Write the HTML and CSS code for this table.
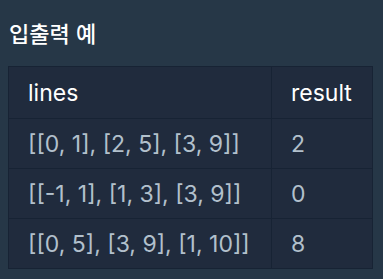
FILE: index.html
```html
<!DOCTYPE html>
<html lang="ko">
<head>
<meta charset="utf-8">
<link rel="stylesheet" href="styles.css">
</head>
<body>
<h5 class="title">입출력 예</h5>
<table class="io">
  <thead>
    <tr><th class="c1">lines</th><th class="c2">result</th></tr>
  </thead>
  <tbody>
    <tr><td>[[0, 1], [2, 5], [3, 9]]</td><td>2</td></tr>
    <tr><td>[[-1, 1], [1, 3], [3, 9]]</td><td>0</td></tr>
    <tr><td>[[0, 5], [3, 9], [1, 10]]</td><td>8</td></tr>
  </tbody>
</table>
</body>
</html>
```

FILE: styles.css
```css
html, body {
  margin: 0;
  background: #263747;
}
body {
  padding: 0 8px;
  font-family: Inter, "Noto Sans CJK KR", sans-serif;
}
.title {
  margin: 0;
  padding: 16px 0 0 1px;
  height: 66px;
  box-sizing: border-box;
  font-family: "Noto Sans CJK KR", sans-serif;
  font-size: 22px;
  font-weight: 500;
  color: #ffffff;
  line-height: 32px;
}
.io {
  width: 365px;
  table-layout: fixed;
  border-collapse: collapse;
  background: #202b3d;
  border: 1px solid #172334;
}
.io th, .io td {
  box-sizing: border-box;
  border: 1px solid #172334;
  text-align: left;
  padding: 0 0 0 19px;
  font-size: 23px;
  font-weight: 400;
  white-space: nowrap;
}
.io .c1 {
  width: 263px;
}
.io th {
  height: 52px;
  color: #ffffff;
}
.io td {
  height: 50px;
  color: #b2c0cc;
}
```
